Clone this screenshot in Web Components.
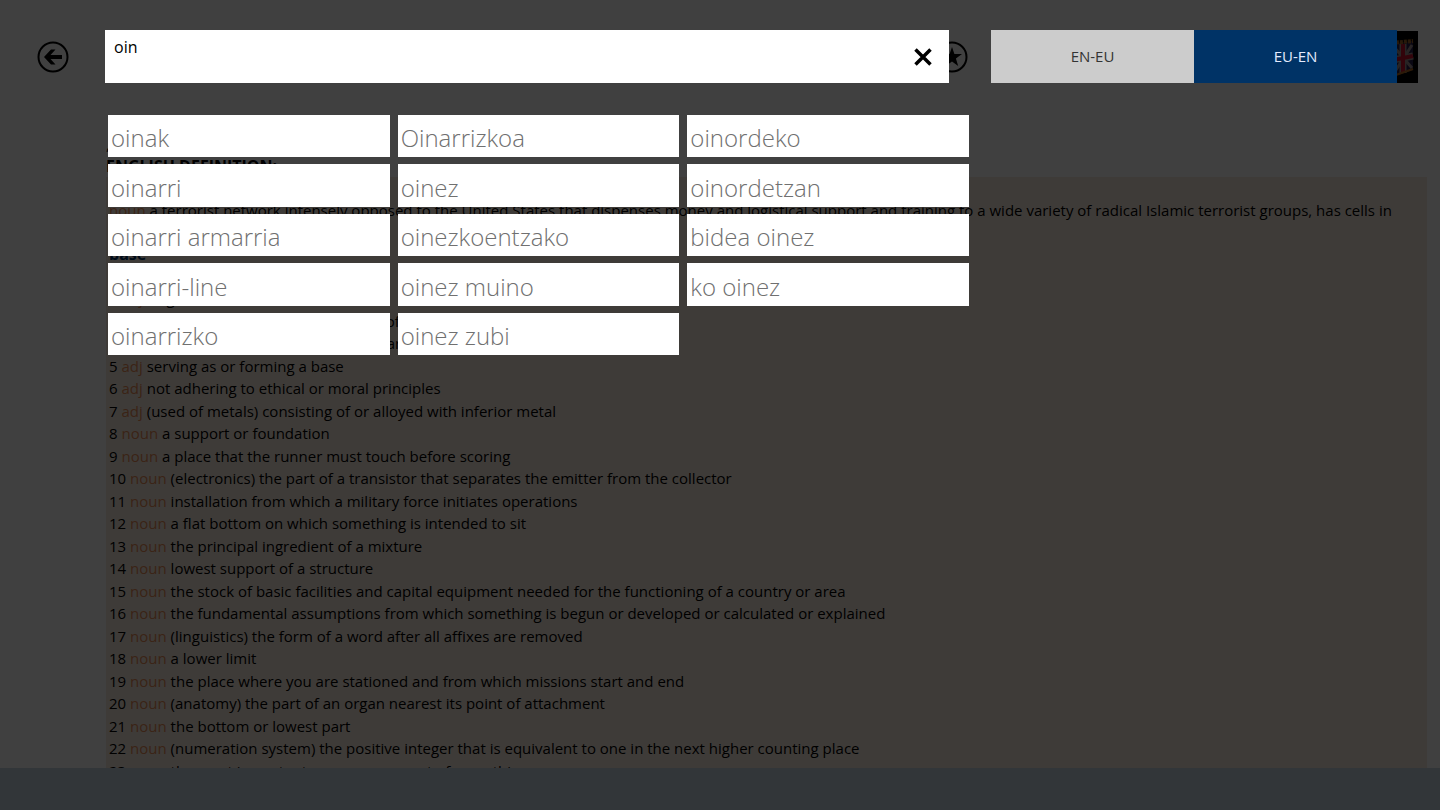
<!DOCTYPE html>
<html lang="en">
<head>
<meta charset="utf-8">
<title>Dictionary</title>
<style>
  html, body { height: 100%; margin: 0; }
  body {
    background: #fff;
    color: #000;
    font: 16px/22px "Open Sans", "Noto Sans", sans-serif;
    overflow: hidden;
  }
</style>
</head>
<body>
<dictionary-app></dictionary-app>

<template id="app-template">
  <style>
    :host { display: flex; flex-direction: column; height: 100%; }
    main { position: relative; flex: 1; min-height: 0; overflow: hidden; }
    /* dims the entry page while the search is open */
    search-pane { position: absolute; inset: 0; }
    footer { height: 42px; background: #323639; }
  </style>
  <main>
    <entry-page></entry-page>
    <search-pane></search-pane>
  </main>
  <footer></footer>
</template>

<template id="icon-template">
  <style>
    :host { display: block; }
    button { display: block; width: 32px; height: 32px; padding: 0; border: 0; background: none; color: inherit; }
    svg { display: block; width: 32px; height: 32px; }
  </style>
  <button type="button"><svg viewBox="0 0 32 32"></svg></button>
</template>

<template id="page-template">
  <style>
    :host { display: flex; flex-direction: column; height: 100%; }
    header { display: flex; align-items: center; height: 53px; padding: 30px 22px 0 37px; }
    .gap { flex: 1; }
    .tools { display: flex; align-items: center; justify-content: space-between; width: 482px; }
    .logo { width: 52px; height: 52px; }
    article { flex: 1; min-height: 0; overflow: hidden; padding: 50px 13px 0 106px; font-size: 15px; }
    h2 { margin: 0; font-size: 16px; line-height: 22px; }
    .lead { margin: 0; }
    .panel { background: #f8ece0; padding: 22px 24px 0 3px; }
    .panel p { margin: 0; }
    h3 { margin: 0; color: #003366; font-size: 16px; line-height: 22px; }
    ol { display: grid; grid-auto-rows: 22px 23px; margin: 0; padding: 0; list-style: none; }
  </style>
  <header>
    <icon-button name="back" label="Back"></icon-button>
    <span class="gap"></span>
    <div class="tools">
      <icon-button name="star" label="Favourite"></icon-button>
      <svg class="logo" viewBox="0 0 52 52" aria-hidden="true">
        <rect width="52" height="52" fill="#000"/>
        <path d="M12 14L47 10V39L26 46L12 40Z" fill="#5c2c12"/>
        <path d="M27 14L47 10V39L27 45Z" fill="#28204c"/>
        <path d="M28 16L46 37M46 14L28 42" stroke="#a09090" stroke-width="3"/>
        <path d="M37 13V42M27 29L47 25" stroke="#a09090" stroke-width="7"/>
        <path d="M37 13V42M27 29L47 25" stroke="#c8102e" stroke-width="4"/>
        <path d="M27 45L47 38" stroke="#b06a20" stroke-width="2"/>
        <path d="M14 13L47 10" stroke="#a06428" stroke-width="4" stroke-dasharray="3 1"/>
      </svg>
    </div>
  </header>
  <article>
    <p class="lead">,</p>
    <h2>ENGLISH DEFINITION:</h2>
    <div class="panel">
      <p><word-class>noun</word-class> a terrorist network intensely opposed to the United States that dispenses money and logistical support and training to a wide variety of radical Islamic terrorist groups, has cells in more than 50 countries</p>
      <h3>base</h3>
      <ol></ol>
    </div>
  </article>
</template>

<template id="class-template">
  <style>
    :host { color: #e88c58; }
  </style>
  <slot></slot>
</template>

<template id="pane-template">
  <style>
    :host { display: block; background: rgba(0, 0, 0, .75); }
    form { display: flex; gap: 42px; padding: 30px 43px 0 105px; }
    .box { display: flex; flex: 1; height: 53px; background: #fff; }
    input {
      flex: 1;
      min-width: 0;
      height: 34px;
      padding: 0 9px;
      border: 0;
      outline: 0;
      background: none;
      color: #000;
      font: inherit;
    }
    icon-button { align-self: center; padding: 0 10px; }
    .langs { display: flex; width: 406px; }
    .langs button { flex: 1; padding: 0 0 2px; border: 0; background: #ccc; color: #333; font: inherit; font-size: 15px; }
    .langs button[aria-pressed="true"] { background: #003366; color: #e4ecff; }
    ul {
      display: grid;
      grid-template-columns: repeat(3, 1fr);
      grid-template-rows: 42px 43px 42px 43px 42px;
      grid-auto-flow: column;
      gap: 7px 8px;
      margin: 32px 471px 0 108px;
      padding: 0;
      list-style: none;
    }
    li { display: grid; }
  </style>
  <form>
    <div class="box">
      <input type="text" value="oin" aria-label="Search" autocomplete="off" spellcheck="false">
      <icon-button name="close" label="Clear"></icon-button>
    </div>
    <div class="langs">
      <button type="button" aria-pressed="false">EN-EU</button>
      <button type="button" aria-pressed="true">EU-EN</button>
    </div>
  </form>
  <ul></ul>
</template>

<template id="suggestion-template">
  <style>
    :host { display: grid; }
    button {
      padding: 4px 3px 0;
      border: 0;
      background: #fff;
      color: #707070;
      font: inherit;
      font-size: 24px;
      font-weight: 300;
      line-height: 38px;
      text-align: left;
      white-space: nowrap;
      overflow: hidden;
    }
  </style>
  <button type="button"><slot></slot></button>
</template>

<script>
  const ICONS = {
    back: '<circle cx="16" cy="16" r="14.5" fill="none" stroke="currentColor" stroke-width="2"/>' +
      '<path d="M7 16L14 8.5H18.5L13.5 14H25V18H13.5L18.5 23.5H14Z" fill="currentColor"/>',
    star: '<circle cx="16" cy="16" r="14.5" fill="none" stroke="currentColor" stroke-width="2"/>' +
      '<path d="M16 6L18.4 13.1H26L19.9 17.6L22.2 25L16 20.5L9.8 25L12.1 17.6L6 13.1H13.6Z" fill="currentColor"/>',
    close: '<path d="M8.5 8.5L23.5 23.5M23.5 8.5L8.5 23.5" stroke="currentColor" stroke-width="3.5"/>'
  };

  const SENSES = [
    ['adj', 'debased; not genuine'],
    ['adj', 'illegitimate'],
    ['adj', 'having or showing an ignoble lack of honor or morality'],
    ['adj', 'of low birth or station (`base\' is an archaic term in this sense)'],
    ['adj', 'serving as or forming a base'],
    ['adj', 'not adhering to ethical or moral principles'],
    ['adj', '(used of metals) consisting of or alloyed with inferior metal'],
    ['noun', 'a support or foundation'],
    ['noun', 'a place that the runner must touch before scoring'],
    ['noun', '(electronics) the part of a transistor that separates the emitter from the collector'],
    ['noun', 'installation from which a military force initiates operations'],
    ['noun', 'a flat bottom on which something is intended to sit'],
    ['noun', 'the principal ingredient of a mixture'],
    ['noun', 'lowest support of a structure'],
    ['noun', 'the stock of basic facilities and capital equipment needed for the functioning of a country or area'],
    ['noun', 'the fundamental assumptions from which something is begun or developed or calculated or explained'],
    ['noun', '(linguistics) the form of a word after all affixes are removed'],
    ['noun', 'a lower limit'],
    ['noun', 'the place where you are stationed and from which missions start and end'],
    ['noun', '(anatomy) the part of an organ nearest its point of attachment'],
    ['noun', 'the bottom or lowest part'],
    ['noun', '(numeration system) the positive integer that is equivalent to one in the next higher counting place'],
    ['noun', 'the most important or necessary part of something']
  ];

  const WORDS = [
    'oinak', 'oinarri', 'oinarri armarria', 'oinarri-line', 'oinarrizko',
    'Oinarrizkoa', 'oinez', 'oinezkoentzako', 'oinez muino', 'oinez zubi',
    'oinordeko', 'oinordetzan', 'bidea oinez', 'ko oinez'
  ];

  class TemplateElement extends HTMLElement {
    constructor(id) {
      super();
      const template = document.getElementById(id);
      this.attachShadow({mode: 'open'}).appendChild(template.content.cloneNode(true));
    }
  }

  class IconButton extends TemplateElement {
    constructor() {
      super('icon-template');
    }

    connectedCallback() {
      this.shadowRoot.querySelector('svg').innerHTML = ICONS[this.getAttribute('name')];
      this.shadowRoot.querySelector('button').setAttribute('aria-label', this.getAttribute('label'));
    }
  }

  class WordClass extends TemplateElement {
    constructor() {
      super('class-template');
    }
  }

  class WordSuggestion extends TemplateElement {
    constructor() {
      super('suggestion-template');
    }
  }

  class EntryPage extends TemplateElement {
    constructor() {
      super('page-template');
      this.shadowRoot.querySelector('ol').innerHTML = SENSES.map(([kind, text], i) =>
        `<li>${i + 1} <word-class>${kind}</word-class> ${text}</li>`).join('');
    }
  }

  class SearchPane extends TemplateElement {
    constructor() {
      super('pane-template');
      const root = this.shadowRoot;
      const input = root.querySelector('input');
      const langs = root.querySelectorAll('.langs button');

      root.querySelector('ul').innerHTML = WORDS.map(word =>
        `<li><word-suggestion>${word}</word-suggestion></li>`).join('');
      root.querySelector('form').addEventListener('submit', e => e.preventDefault());
      root.querySelector('icon-button').addEventListener('click', () => {
        input.value = '';
        input.focus();
      });
      langs.forEach(button => button.addEventListener('click', () => {
        langs.forEach(b => b.setAttribute('aria-pressed', b === button));
      }));
    }
  }

  class DictionaryApp extends TemplateElement {
    constructor() {
      super('app-template');
    }
  }

  customElements.define('icon-button', IconButton);
  customElements.define('word-class', WordClass);
  customElements.define('word-suggestion', WordSuggestion);
  customElements.define('entry-page', EntryPage);
  customElements.define('search-pane', SearchPane);
  customElements.define('dictionary-app', DictionaryApp);
</script>
</body>
</html>
